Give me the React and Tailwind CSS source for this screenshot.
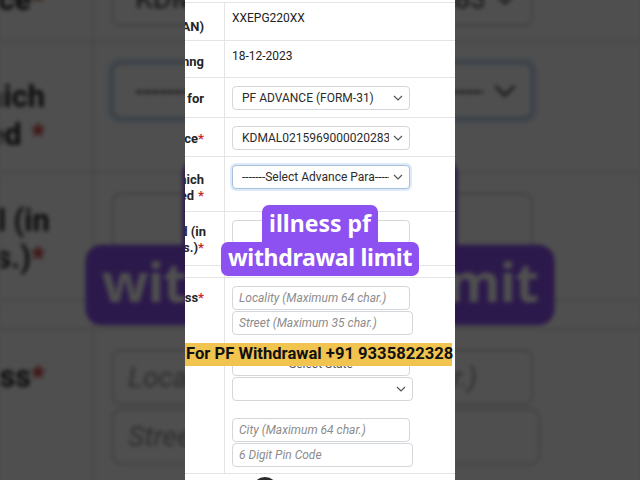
import React from "react";

function Chevron() {
  return (
    <svg width="10" height="6" viewBox="0 0 10 6" className="shrink-0">
      <polyline points="1,1 5,5 9,1" fill="none" stroke="#555" strokeWidth="1.2" />
    </svg>
  );
}

function Star({ gap }) {
  return <span className={gap ? "ml-[4px] text-[#c62828]" : "text-[#c62828]"}>*</span>;
}

function Row({ h, label, labelCls = "justify-center", children, divider = true }) {
  return (
    <div className={`flex border-b border-[#e4e4e4] ${h}`}>
      <div
        className={`w-[40px] shrink-0 flex flex-col items-end overflow-hidden pr-[20px] text-[13px] leading-[16px] font-bold text-[#252525] ${labelCls} ${
          divider ? "border-r border-[#e4e4e4]" : ""
        }`}
      >
        {label}
      </div>
      <div className="flex-1 pl-[7px] pt-[8px]">{children}</div>
    </div>
  );
}

function Select({ text, w = "w-[178px]", focus }) {
  return (
    <div
      className={`${w} h-[24px] rounded-[4px] border flex items-center pl-[9px] pr-[6px] gap-[4px] bg-white ${
        focus
          ? "border-[#a9c1d8] shadow-[0_0_0_2px_rgba(120,170,230,0.25)]"
          : "border-[#d3d6da]"
      }`}
    >
      <span className="flex-1 overflow-hidden whitespace-nowrap text-[12px] leading-[14px] text-[#2b2b2b]">
        {text}
      </span>
      <Chevron />
    </div>
  );
}

function Input({ text, w = "w-[178px]" }) {
  return (
    <div
      className={`${w} h-[24px] rounded-[4px] border border-[#d3d6da] flex items-center pl-[6px] bg-white`}
    >
      <span className="whitespace-nowrap italic text-[12px] leading-[14px] text-[#8c8c8c]">
        {text}
      </span>
    </div>
  );
}

function Strip() {
  return (
    <div className="relative w-[270px] h-[480px] shrink-0 overflow-hidden bg-white font-['Roboto',sans-serif] text-[#222]">
      <div className="h-[3px] border-b border-[#e4e4e4]" />
      <Row h="h-[38px]" label={<div className="whitespace-nowrap">Account Number (PAN)</div>} labelCls="justify-center pt-[10px]">
        <div className="text-[12px] leading-[14px]">XXEPG220XX</div>
      </Row>
      <Row h="h-[37px]" label={<div className="whitespace-nowrap">Date of Joinng</div>} labelCls="justify-center pt-[5px]">
        <div className="text-[12px] leading-[14px]">18-12-2023</div>
      </Row>
      <Row h="h-[40px]" label={<div className="whitespace-nowrap">Claim Applied for</div>} labelCls="justify-center pt-[2px]">
        <Select text="PF ADVANCE (FORM-31)" />
      </Row>
      <Row
        h="h-[39px]"
        label={
          <div className="whitespace-nowrap">
            Service<Star />
          </div>
        }
        labelCls="justify-center pt-[3px] pr-[14px]"
      >
        <Select text="KDMAL021596900002028350000" />
      </Row>
      <Row
        h="h-[55px]"
        label={
          <>
            <div className="whitespace-nowrap">Purpose for which</div>
            <div className="whitespace-nowrap">
              advance required<Star gap />
            </div>
          </>
        }
        labelCls="justify-center pt-[8px] pr-[18px]"
      >
        <Select text="-------Select Advance Para-------" focus />
      </Row>
      <Row
        h="h-[54px]"
        label={
          <>
            <div className="whitespace-nowrap mr-[-2px]">Amount required (in</div>
            <div className="whitespace-nowrap">
              Rs.)<Star />
            </div>
          </>
        }
        labelCls="justify-center pt-[3px] pr-[18px]"
      >
        <div className="w-[178px] h-[24px] rounded-[4px] border border-[#d3d6da]" />
      </Row>
      <Row h="h-[12px]" label={null}>
        {null}
      </Row>
      <Row
        h="h-[196px]"
        label={
          <div className="whitespace-nowrap">
            Address<Star />
          </div>
        }
        labelCls="justify-start pt-[12px] pr-[17px]"
      >
        <div className="flex flex-col">
          <Input text="Locality (Maximum 64 char.)" />
          <div className="mt-[1px]">
            <Input text="Street (Maximum 35 char.)" w="w-[181px]" />
          </div>
          <div className="mt-[17px] w-[178px] h-[24px] rounded-[4px] border border-[#d3d6da] flex items-center justify-center text-[12px] text-[#555]">
            ------Select State------
          </div>
          <div className="mt-[1px]">
            <Select text="" w="w-[181px]" />
          </div>
          <div className="mt-[17px]">
            <Input text="City (Maximum 64 char.)" />
          </div>
          <div className="mt-[1px]">
            <Input text="6 Digit Pin Code" w="w-[181px]" />
          </div>
        </div>
      </Row>
      <div className="pl-[67px] pt-[3px]">
        <div className="w-[26px] h-[26px] rounded-full bg-[#2a2a2a]" />
      </div>

      {/* title overlay */}
      <div className="absolute left-0 right-0 top-[205px] flex flex-col items-center font-['Noto_Sans',sans-serif] font-bold text-white">
        <div className="h-[38px] w-[116px] rounded-t-[7px] bg-[#8d51f1] flex items-center justify-center text-[23px] leading-none pb-[2px]">
          illness pf
        </div>
        <div className="-mt-[1px] h-[34px] w-[198px] rounded-[7px] bg-[#8d51f1] flex items-center justify-center text-[23px] tracking-[-0.3px] leading-none pb-[4px]">
          withdrawal limit
        </div>
      </div>

      {/* phone banner */}
      <div className="absolute left-0 top-[343px] h-[23px] w-[267px] bg-[#f0c44e] flex items-center pl-[1px] whitespace-nowrap font-['Roboto',sans-serif] font-bold text-[16.6px] leading-none text-[#111]">
        For PF Withdrawal +91 9335822328
      </div>
    </div>
  );
}

export default function App() {
  return (
    <div className="relative w-[640px] h-[480px] overflow-hidden bg-[#4b4b4b]">
      <div className="absolute inset-0 flex items-center justify-center blur-[2px] brightness-[0.31]">
        <div className="shrink-0 scale-[2.37]">
          <Strip />
        </div>
      </div>
      <div className="relative flex h-full justify-center">
        <Strip />
      </div>
    </div>
  );
}
